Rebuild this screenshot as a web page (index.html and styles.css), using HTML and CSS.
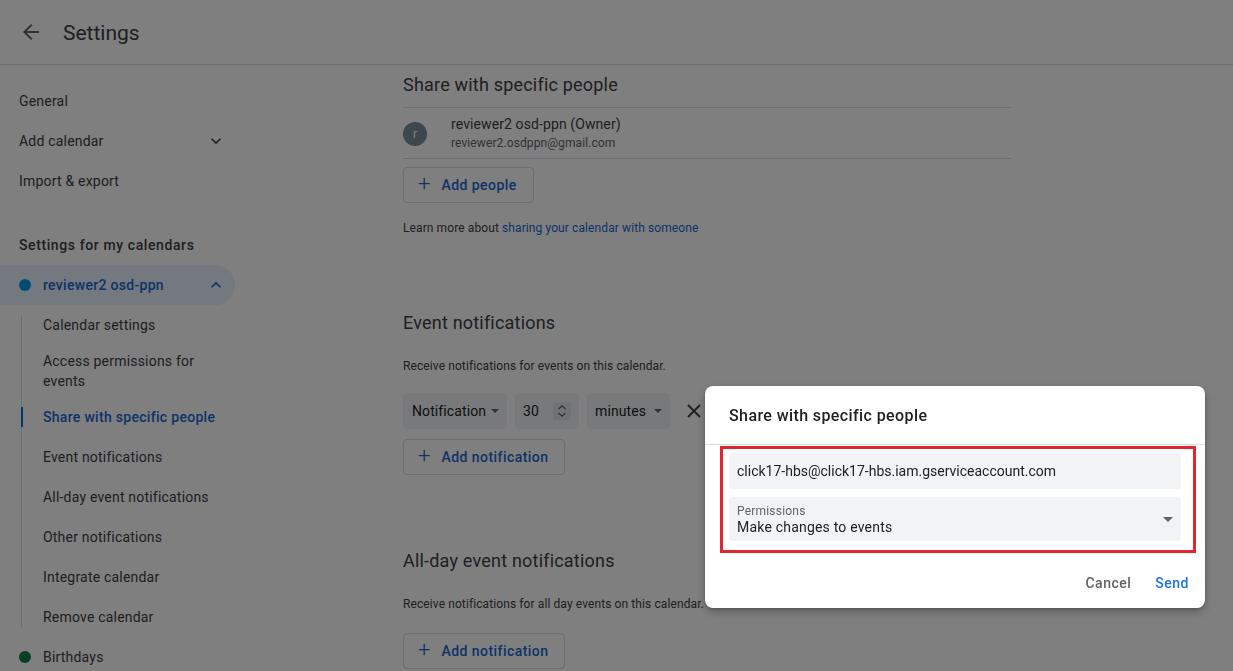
FILE: index.html
```html
<!DOCTYPE html>
<html lang="en">
<head>
<meta charset="utf-8">
<title>Settings</title>
<link rel="stylesheet" href="styles.css">
</head>
<body>
<div class="page">
  <header class="topbar">
    <span class="back">
      <svg width="24" height="24" viewBox="0 0 24 24"><path d="M20 11H7.83l5.59-5.59L12 4l-8 8 8 8 1.41-1.41L7.83 13H20v-2z" fill="#5f6368"/></svg>
    </span>
    <h1 class="title">Settings</h1>
  </header>
  <div class="body">
    <nav class="sidebar">
      <div class="nav-item">General</div>
      <div class="nav-item">Add calendar
        <svg class="chev" width="20" height="20" viewBox="0 0 24 24"><path d="M7.41 8.59 12 13.17l4.59-4.58L18 10l-6 6-6-6z" fill="#3c4043"/></svg>
      </div>
      <div class="nav-item">Import &amp; export</div>
      <div class="nav-head">Settings for my calendars</div>
      <div class="cal-item selected"><span class="dot dot-blue"></span>reviewer2 osd-ppn
        <svg class="chev" width="20" height="20" viewBox="0 0 24 24"><path d="M7.41 15.41 12 10.83l4.59 4.58L18 14l-6-6-6 6z" fill="#1967d2"/></svg>
      </div>
      <div class="subnav">
        <div class="sub-item">Calendar settings</div>
        <div class="sub-item">Access permissions for events</div>
        <div class="sub-item active">Share with specific people</div>
        <div class="sub-item">Event notifications</div>
        <div class="sub-item">All-day event notifications</div>
        <div class="sub-item">Other notifications</div>
        <div class="sub-item">Integrate calendar</div>
        <div class="sub-item">Remove calendar</div>
      </div>
      <div class="cal-item"><span class="dot dot-green"></span>Birthdays</div>
    </nav>
    <main class="main">
      <section class="sec sec-share">
        <h2 class="sec-title">Share with specific people</h2>
        <div class="owner">
          <span class="avatar">r</span>
          <div class="owner-text">
            <div class="owner-name">reviewer2 osd-ppn (Owner)</div>
            <div class="owner-mail">reviewer2.osdppn@gmail.com</div>
          </div>
        </div>
        <button class="obtn"><span class="plus">+</span>Add people</button>
        <p class="hint">Learn more about <span class="link">sharing your calendar with someone</span></p>
      </section>
      <section class="sec sec-event">
        <h2 class="sec-title">Event notifications</h2>
        <p class="hint">Receive notifications for events on this calendar.</p>
        <div class="notif-row">
          <div class="sel sel-type">Notification<span class="tri"></span></div>
          <div class="sel sel-num">30<span class="spin">
            <svg width="10" height="14" viewBox="0 0 10 14"><path d="M1.5 5 5 1.8 8.5 5M1.5 9 5 12.2 8.5 9" fill="none" stroke="#5f6368" stroke-width="1.2"/></svg>
          </span></div>
          <div class="sel sel-unit">minutes<span class="tri"></span></div>
          <svg class="close" width="14" height="14" viewBox="0 0 14 14"><path d="M1 1 13 13M13 1 1 13" stroke="#3c4043" stroke-width="2"/></svg>
        </div>
        <button class="obtn"><span class="plus">+</span>Add notification</button>
      </section>
      <section class="sec sec-allday">
        <h2 class="sec-title">All-day event notifications</h2>
        <p class="hint">Receive notifications for all day events on this calendar.</p>
        <button class="obtn"><span class="plus">+</span>Add notification</button>
      </section>
    </main>
  </div>
</div>
<div class="scrim"></div>
<div class="dialog">
  <div class="dlg-title">Share with specific people</div>
  <div class="annot">
    <div class="field">click17-hbs@click17-hbs.iam.gserviceaccount.com</div>
    <div class="field select">
      <div class="sel-label">Permissions</div>
      <div class="sel-value">Make changes to events</div>
      <span class="tri tri-dlg"></span>
    </div>
  </div>
  <div class="actions">
    <button class="tbtn cancel">Cancel</button>
    <button class="tbtn send">Send</button>
  </div>
</div>
</body>
</html>
```
FILE: styles.css
```css
* { box-sizing: border-box; }
html, body { margin: 0; padding: 0; }
body {
  font-family: Roboto, "Liberation Sans", Arial, sans-serif;
  color: #3c4043;
  background: #fff;
  width: 1233px;
  height: 671px;
  overflow: hidden;
}
.page { height: 671px; overflow: hidden; }

.topbar {
  height: 65px;
  border-bottom: 1px solid #dadce0;
  display: flex;
  align-items: center;
}
.back { width: 24px; height: 24px; margin-left: 19px; display: flex; }
.title {
  margin: 2px 0 0 20px;
  font-size: 21px;
  font-weight: 400;
  color: #3c4043;
  letter-spacing: 0;
}

.body { display: grid; grid-template-columns: 256px 1fr; }

.sidebar { padding-top: 16px; font-size: 14px; letter-spacing: 0.2px; }
.nav-item {
  height: 40px;
  display: flex;
  align-items: center;
  padding-left: 19px;
  position: relative;
  width: 235px;
}
.chev { position: absolute; right: 9px; top: 10px; }
.nav-head {
  height: 40px;
  margin-top: 24px;
  display: flex;
  align-items: center;
  padding-left: 19px;
  font-weight: 500;
  letter-spacing: 0.6px;
}
.cal-item {
  height: 40px;
  width: 235px;
  display: flex;
  align-items: center;
  padding-left: 19px;
  position: relative;
}
.cal-item.selected {
  background: #e8f0fe;
  border-radius: 0 20px 20px 0;
  color: #1967d2;
  font-weight: 500;
  letter-spacing: 0.3px;
}
.dot { width: 12px; height: 12px; border-radius: 50%; margin-right: 12px; }
.dot-blue { background: #039be5; }
.dot-green { background: #0b8043; }

.subnav {
  margin-left: 21px;
  padding: 0;
  position: relative;
}
.subnav::before {
  content: "";
  position: absolute;
  left: 0; top: 10px; bottom: 10px;
  width: 1px;
  background: #dadce0;
}
.sub-item {
  min-height: 40px;
  padding: 6px 6px 6px 22px;
  display: flex;
  align-items: center;
  line-height: 20px;
  width: 214px;
  position: relative;
}
.sub-item.active { color: #1967d2; font-weight: 500; letter-spacing: 0.3px; }
.sub-item.active::before {
  content: "";
  position: absolute;
  left: 0; top: 10px; bottom: 10px;
  width: 2px;
  background: #1967d2;
}

.main { padding-left: 147px; }
.sec { width: 608px; }
.sec-title {
  margin: 0;
  font-size: 18px;
  font-weight: 400;
  color: #3c4043;
  line-height: 24px;
  letter-spacing: 0.2px;
}
.sec-share .sec-title { padding-top: 8px; padding-bottom: 10px; border-bottom: 1px solid #dadce0; }
.owner {
  height: 51px;
  display: flex;
  align-items: center;
  border-bottom: 1px solid #dadce0;
}
.avatar {
  width: 24px; height: 24px;
  border-radius: 50%;
  background: #78909c;
  color: #fff;
  font-size: 12px;
  display: flex; align-items: center; justify-content: center;
  margin-right: 24px;
  margin-top: 1px;
}
.owner-name { font-size: 14px; line-height: 20px; color: #3c4043; letter-spacing: 0.1px; }
.owner-mail { font-size: 12px; line-height: 18px; color: #5f6368; letter-spacing: 0.1px; }

.obtn {
  display: flex;
  align-items: center;
  height: 36px;
  border: 1px solid #dadce0;
  border-radius: 4px;
  background: #fff;
  font-family: inherit;
  font-size: 14px;
  font-weight: 500;
  color: #1967d2;
  padding: 0 16px 0 14px;
  letter-spacing: 0.45px;
}
.plus {
  font-size: 22px;
  font-weight: 300;
  margin-right: 11px;
  line-height: 20px;
  margin-top: -2px;
  letter-spacing: 0;
}
.sec-share .obtn { margin-top: 8px; }
.hint { margin: 0; font-size: 12px; line-height: 16px; color: #3c4043; letter-spacing: 0.1px; }
.sec-share .hint { margin-top: 17px; }
.link { color: #1967d2; }

.sec-event { margin-top: 75px; }
.sec-event .hint { margin-top: 23px; }
.notif-row { display: flex; align-items: center; margin-top: 19px; height: 36px; }
.sel {
  height: 36px;
  background: #f1f3f4;
  border-radius: 4px;
  display: flex;
  align-items: center;
  font-size: 14px;
  color: #202124;
  padding-left: 9px;
  position: relative;
  margin-right: 8px;
  letter-spacing: 0.1px;
}
.sel-type { width: 104px; }
.sel-num { width: 64px; padding-left: 8px; }
.sel-unit { width: 83px; padding-left: 8px; margin-right: 17px; }
.tri {
  position: absolute;
  right: 8px;
  top: 16px;
  width: 0; height: 0;
  border-left: 4px solid transparent;
  border-right: 4px solid transparent;
  border-top: 4px solid #5f6368;
}
.spin {
  position: absolute;
  left: 38px; top: 9px;
  width: 18px; height: 18px;
  background: #e3e5e7;
  display: flex; align-items: center; justify-content: center;
}
.sec-event .obtn { margin-top: 10px; }

.sec-allday { margin-top: 74px; }
.sec-allday .hint { margin-top: 23px; }
.sec-allday .obtn { margin-top: 21px; }

.scrim {
  position: fixed;
  inset: 0;
  background: rgba(0, 0, 0, 0.5);
}

.dialog {
  position: fixed;
  left: 705px;
  top: 386px;
  width: 500px;
  background: #fff;
  border-radius: 8px;
  box-shadow: 0 4px 10px rgba(0,0,0,0.25), 0 1px 3px rgba(0,0,0,0.2);
  color: #202124;
}
.dlg-title {
  padding: 20px 24px 18px;
  font-size: 16px;
  line-height: 20px;
  font-weight: 500;
  border-bottom: 1px solid #dadce0;
  letter-spacing: 0.4px;
}
.annot {
  margin: 1px 9px 0 15px;
  border: 3px solid #e3262b;
  padding: 4px 12px 9px 6px;
}
.field {
  height: 36px;
  background: #f1f3f4;
  border-radius: 4px;
  padding: 0 8px;
  display: flex;
  align-items: center;
  font-size: 14px;
  color: #202124;
}
.field.select {
  margin-top: 8px;
  height: 44px;
  display: block;
  padding-top: 7px;
  position: relative;
}
.sel-label { font-size: 12px; line-height: 14px; color: #5f6368; letter-spacing: 0.2px; }
.sel-value { font-size: 14px; line-height: 18px; color: #202124; letter-spacing: 0.2px; }
.tri-dlg { right: 8px; top: 20px; border-left-width: 5px; border-right-width: 5px; border-top-width: 5px; }

.actions {
  display: flex;
  justify-content: flex-end;
  gap: 8px;
  margin-top: 12px;
  padding: 0 8px 7px 0;
}
.tbtn {
  height: 36px;
  padding: 0 8px;
  border: 0;
  background: transparent;
  font-family: inherit;
  font-size: 14px;
  font-weight: 500;
  letter-spacing: 0.5px;
}
.cancel { color: #5f6368; }
.send { color: #1a73e8; }
```
